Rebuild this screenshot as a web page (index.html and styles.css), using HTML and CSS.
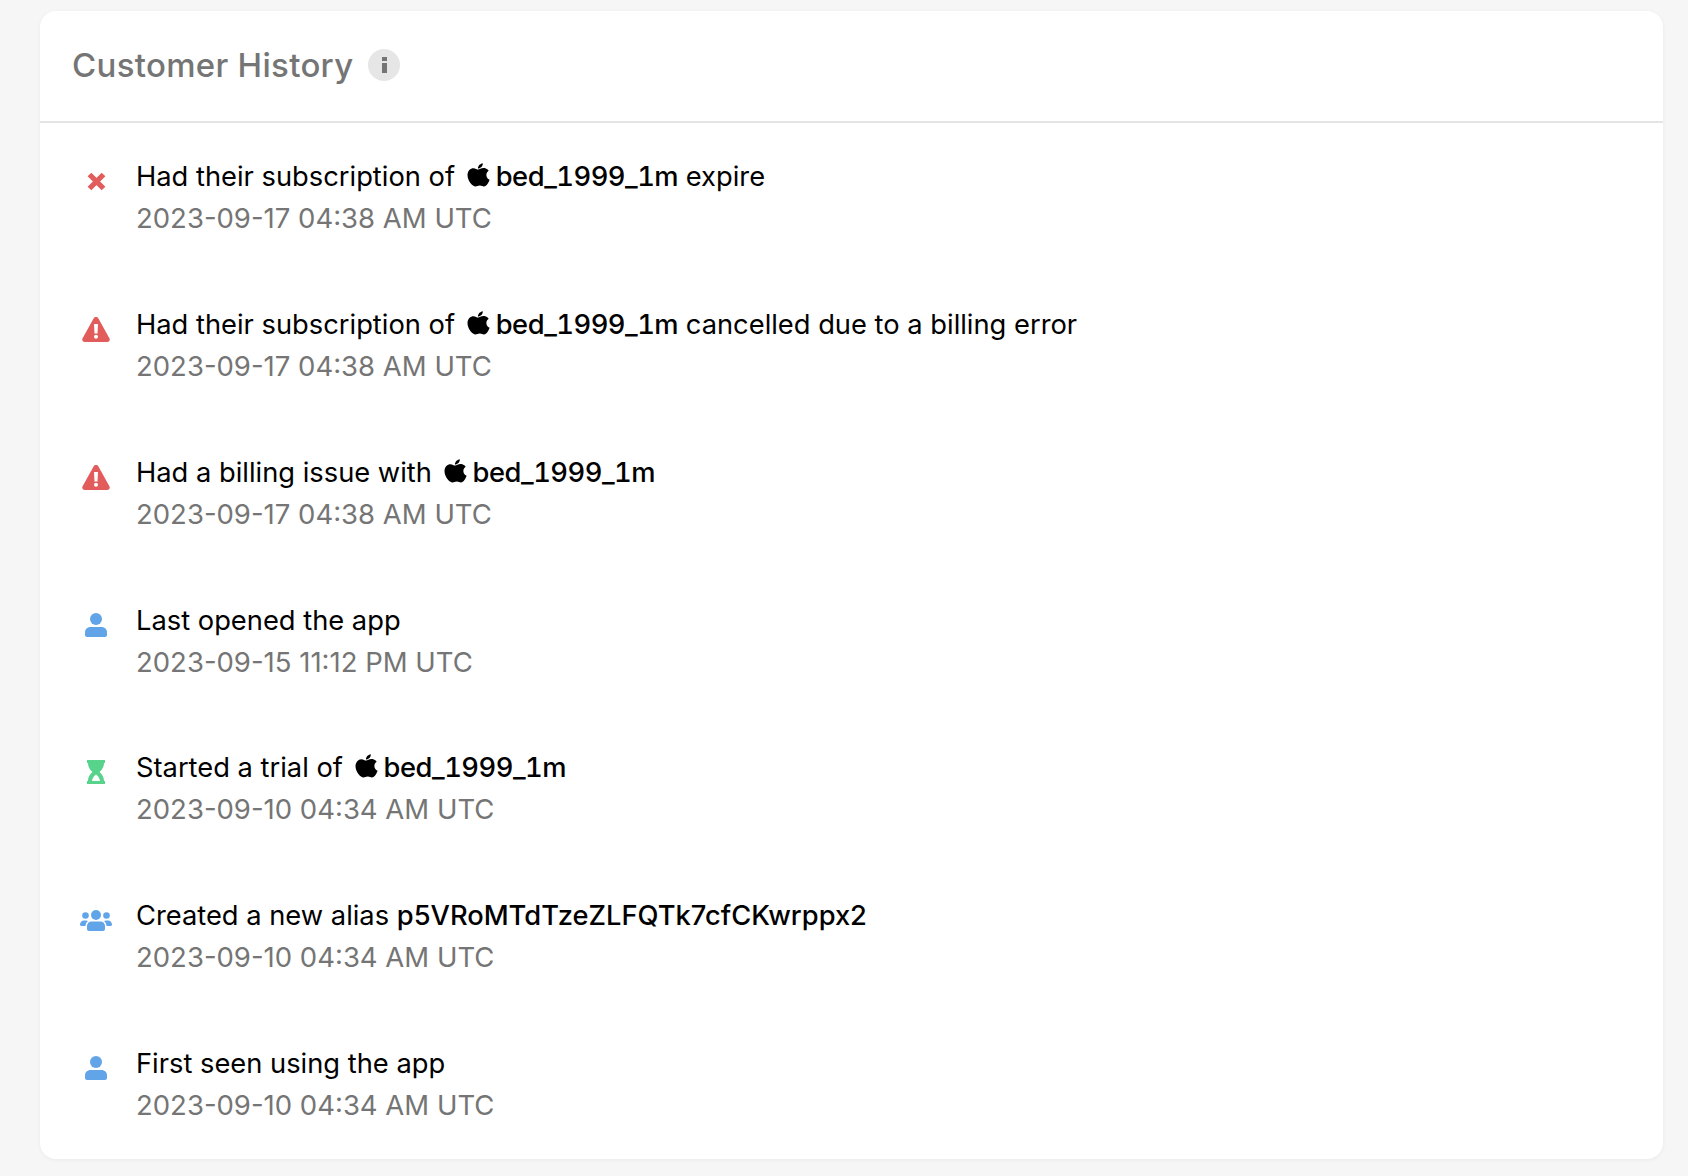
FILE: index.html
```html
<!DOCTYPE html>
<html lang="en">
<head>
<meta charset="utf-8">
<title>Customer History</title>
<link rel="stylesheet" href="styles.css">
</head>
<body>
<svg class="defs" width="0" height="0" aria-hidden="true">
  <symbol id="apple" viewBox="0 0 24 26"><path d="M12.2 6.6c1.2 0 2.9-1.5 5.3-1.5 1 0 3.6.3 5.2 2.7-3.4 2-3 7.3.9 9-.8 2.3-2.9 6.800-5.700 6.800-1.400 0-2.100-1-4.100-1-2.100 0-2.800 1-4.200 1C6.500 23.600 1.500 17.800 1.500 12.300c0-4.500 3-7.100 6-7.100 1.800 0 3.400 1.400 4.700 1.400z"/><path d="M12 5.500C11.800 3 14 .6 16.800.2c.2 2.800-2.200 5.300-4.800 5.300z"/></symbol>
  <symbol id="user" viewBox="0 0 24 26"><circle cx="12" cy="7" r="6"/><path d="M6.500 15h11c3.200 0 5.500 2.300 5.500 5.500V23c0 1-1 2-2 2H3c-1 0-2-1-2-2v-2.500C1 17.300 3.300 15 6.500 15z"/></symbol>
  <symbol id="warn" viewBox="0 0 28 26"><path fill-rule="evenodd" d="M14 .5c1 0 1.800.5 2.300 1.300l11.100 20c1 1.800-.2 3.700-2.200 3.700H2.800c-2 0-3.200-1.900-2.200-3.700l11.100-20C12.200 1 13 .5 14 .5zM12 7.500l.5 9.500h3l.5-9.500zM14 18.200a2 2 0 1 0 0 4 2 2 0 0 0 0-4z"/></symbol>
</svg>
<main class="card">
  <header class="card-head">
    <h1 class="title">Customer History</h1>
    <span class="info" aria-label="info"><span class="info-dot"></span><span class="info-bar"></span></span>
  </header>
  <ul class="events">
    <li class="event">
      <span class="ico"><svg class="i-x" viewBox="0 0 18 18"><path d="M3 3l12 12M15 3L3 15"/></svg></span>
      <div class="body">
        <p class="line">Had their subscription of <svg class="apple"><use href="#apple"/></svg><b class="product">bed_1999_1m</b> expire</p>
        <p class="time">2023-09-17 04:38 AM UTC</p>
      </div>
    </li>
    <li class="event">
      <span class="ico"><svg class="i-warn"><use href="#warn"/></svg></span>
      <div class="body">
        <p class="line">Had their subscription of <svg class="apple"><use href="#apple"/></svg><b class="product">bed_1999_1m</b> cancelled due to a billing error</p>
        <p class="time">2023-09-17 04:38 AM UTC</p>
      </div>
    </li>
    <li class="event">
      <span class="ico"><svg class="i-warn"><use href="#warn"/></svg></span>
      <div class="body">
        <p class="line">Had a billing issue with <svg class="apple"><use href="#apple"/></svg><b class="product">bed_1999_1m</b></p>
        <p class="time">2023-09-17 04:38 AM UTC</p>
      </div>
    </li>
    <li class="event">
      <span class="ico"><svg class="i-user"><use href="#user"/></svg></span>
      <div class="body">
        <p class="line">Last opened the app</p>
        <p class="time">2023-09-15 11:12 PM UTC</p>
      </div>
    </li>
    <li class="event">
      <span class="ico"><svg class="i-glass" viewBox="0 0 20 26"><path fill-rule="evenodd" d="M1 1h18v3h-1c0 4.500-2.500 7-4.500 9 2 2 4.500 4.500 4.500 9h1v3H1v-3h1c0-4.500 2.500-7 4.500-9C4.500 11 2 8.500 2 4H1zM10 15.500c-1.800 1.300-3.500 3.300-4 6.500h8c-.500-3.200-2.200-5.200-4-6.500z"/></svg></span>
      <div class="body">
        <p class="line">Started a trial of <svg class="apple"><use href="#apple"/></svg><b class="product">bed_1999_1m</b></p>
        <p class="time">2023-09-10 04:34 AM UTC</p>
      </div>
    </li>
    <li class="event">
      <span class="ico"><svg class="i-users" viewBox="0 0 32 22"><circle cx="16" cy="6" r="5"/><path d="M11.500 12.500h9c2.500 0 4.500 2 4.500 4.500v3c0 1-.8 2-2 2H9c-1.200 0-2-1-2-2v-3c0-2.500 2-4.500 4.500-4.500z"/><circle cx="5.500" cy="6.500" r="3.300"/><circle cx="26.500" cy="6.500" r="3.300"/><path d="M6 11.500c.8 0 1.500.2 2 .5-1.500 1.200-2.500 3-2.500 5H1.500C.7 17 0 16.300 0 15.500 0 13.300 1.800 11.500 4 11.500zM26 11.500c-.8 0-1.500.2-2 .5 1.500 1.200 2.500 3 2.500 5h4c.8 0 1.500-.7 1.500-1.500 0-2.200-1.800-4-4-4z"/></svg></span>
      <div class="body">
        <p class="line">Created a new alias <b>p5VRoMTdTzeZLFQTk7cfCKwrppx2</b></p>
        <p class="time">2023-09-10 04:34 AM UTC</p>
      </div>
    </li>
    <li class="event">
      <span class="ico"><svg class="i-user"><use href="#user"/></svg></span>
      <div class="body">
        <p class="line">First seen using the app</p>
        <p class="time">2023-09-10 04:34 AM UTC</p>
      </div>
    </li>
  </ul>
</main>
</body>
</html>
```
FILE: styles.css
```css
* { box-sizing: border-box; }
html, body { margin: 0; height: 100%; }
body {
  background: #f6f6f6;
  padding: 11px 25px 17px 40px;
  font-family: Inter, "Liberation Sans", sans-serif;
  overflow: hidden;
}
.defs { display: block; height: 0; }
.card {
  background: #fff;
  border-radius: 16px;
  height: 1148px;
  box-shadow: 0 1px 4px rgba(0, 0, 0, .05);
}
.card-head {
  height: 112px;
  padding: 0 32px 2px;
  display: flex;
  align-items: center;
  gap: 15px;
  border-bottom: 2px solid #e4e4e4;
}
.title {
  margin: 0;
  font-size: 33px;
  font-weight: 500;
  letter-spacing: .3px;
  color: #757575;
}
.info {
  width: 32px;
  height: 32px;
  border-radius: 50%;
  background: #e6e6e6;
  display: flex;
  flex-direction: column;
  align-items: center;
  justify-content: center;
  gap: 2px;
}
.info-dot { width: 5px; height: 4px; background: #757575; }
.info-bar { width: 5px; height: 10px; background: #757575; }
.events { list-style: none; margin: 0; padding: 0 0 0 40px; }
.event { display: flex; height: 147.85px; padding-top: 33px; }
.ico { width: 56px; flex: none; padding-top: 12px; display: flex; justify-content: flex-start; }
.body { min-width: 0; }
.line, .time { margin: 0; }
.line { font-size: 27.3px; line-height: 42px; color: #000; }
.line b { font-weight: 450; }
.product { font-variant-numeric: tabular-nums; letter-spacing: -.5px; }
.time { font-size: 27.5px; line-height: 41px; color: #757575; }
.apple { width: 24px; height: 26px; margin: 0 6px 0 3px; vertical-align: -3px; fill: #000; }
.i-x { width: 21px; height: 21px; margin: 3px 0 0 6px; fill: none; stroke: #e25c5c; stroke-width: 4.5; }
.i-warn { width: 28px; height: 27px; margin-left: 2px; fill: #e25c5c; }
.i-user { width: 24px; height: 26px; margin-left: 4px; fill: #62a4e8; }
.i-glass { width: 20px; height: 26px; margin-left: 6px; fill: #57d38c; }
.i-users { width: 32px; height: 22px; margin-top: 2px; fill: #62a4e8; }
```
